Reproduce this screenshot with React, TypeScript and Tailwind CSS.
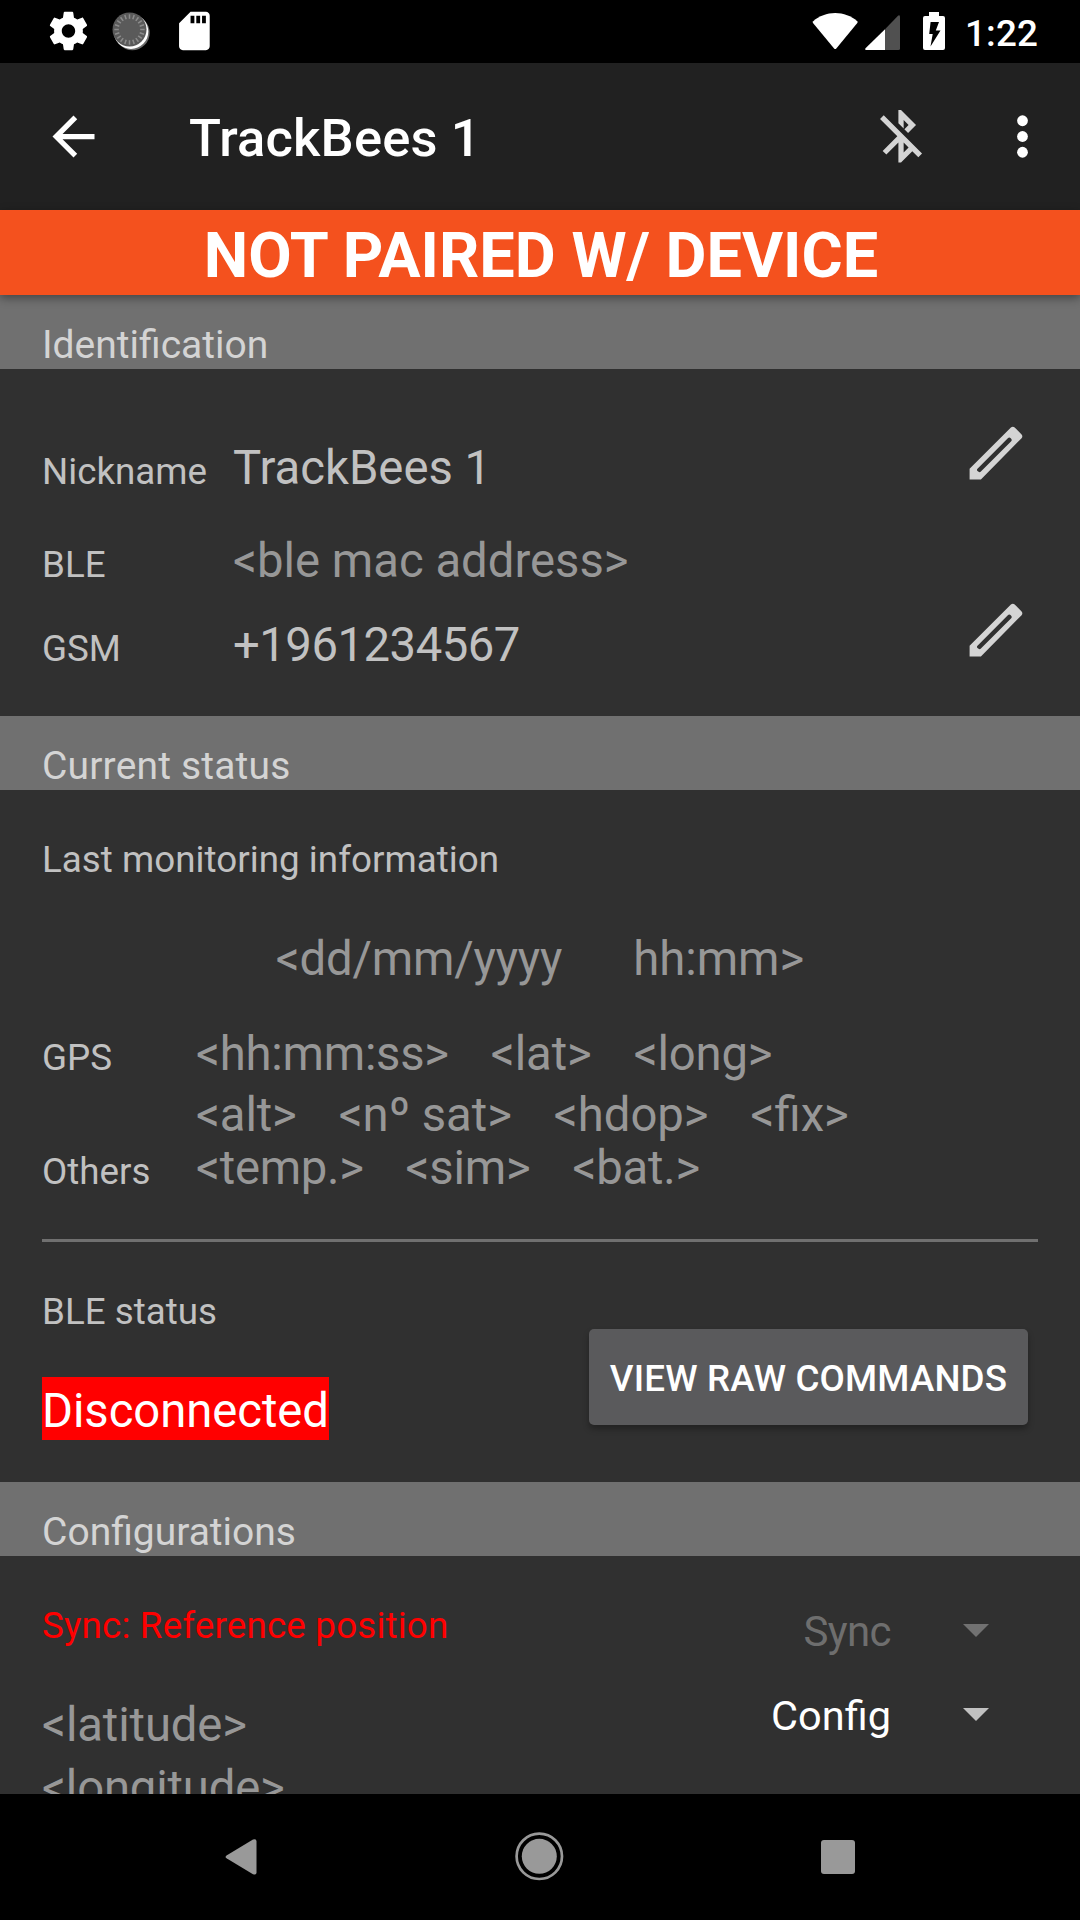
import type { ReactNode } from 'react';

const TICKS = Array.from({ length: 20 }, (_, i) => i * 18);

function StatusBar() {
  return (
    <div className="flex h-[63px] shrink-0 items-start bg-black pl-[45px] pr-[42px] text-white">
      <svg className="mt-[8px] h-[46px] w-[46px]" viewBox="-0.25 0 24 24" fill="currentColor">
        <path d="M19.43 12.98c.04-.32.07-.64.07-.98s-.03-.66-.07-.98l2.11-1.65c.19-.15.24-.42.12-.64l-2-3.46c-.12-.22-.39-.3-.61-.22l-2.49 1c-.52-.4-1.08-.73-1.69-.98l-.38-2.65C14.46 2.18 14.25 2 14 2h-4c-.25 0-.46.18-.49.42l-.38 2.65c-.61.25-1.17.59-1.69.98l-2.49-1c-.23-.09-.49 0-.61.22l-2 3.46c-.13.22-.07.49.12.64l2.11 1.65c-.04.32-.07.65-.07.98s.03.66.07.98l-2.11 1.65c-.19.15-.24.42-.12.64l2 3.46c.12.22.39.3.61.22l2.49-1c.52.4 1.08.73 1.69.98l.38 2.65c.03.24.24.42.49.42h4c.25 0 .46-.18.49-.42l.38-2.65c.61-.25 1.17-.59 1.69-.98l2.49 1c.23.09.49 0 .61-.22l2-3.46c.12-.22.07-.49-.12-.64l-2.11-1.65zM12 15.5c-1.93 0-3.5-1.57-3.5-3.5s1.57-3.5 3.5-3.5 3.5 1.57 3.5 3.5-1.57 3.5-3.5 3.5z" />
      </svg>
      <svg className="ml-[19px] mt-[10px] h-[42px] w-[42px]" viewBox="110 10 42 42">
        <circle cx="132.3" cy="32.8" r="17.4" fill="#6a6a6a" />
        <circle cx="131" cy="31.6" r="17.3" fill="#fff" />
        <circle cx="129.5" cy="29.5" r="17" fill="#5a5a5a" />
        {TICKS.map((deg) => (
          <line key={deg} x1="129.5" y1="14.3" x2="129.5" y2="18.8" stroke="#8c8c8c" strokeWidth="1.5" transform={`rotate(${deg} 129.5 29.5)`} />
        ))}
      </svg>
      <svg className="ml-[19px] mt-[8px] h-[46px] w-[46px]" viewBox="-0.2 0 24 24" fill="currentColor">
        <path d="M18 2h-8L4.02 8 4 20c0 1.1.9 2 2 2h12c1.1 0 2-.9 2-2V4c0-1.1-.9-2-2-2zm-6 6h-2V4h2v4zm3 0h-2V4h2v4zm3 0h-2V4h2v4z" />
      </svg>
      <svg className="ml-auto mt-[10px] h-[42px] w-[46px]" viewBox="812 10 46 42" fill="currentColor">
        <path d="M813.2 21.2C819 16 827 13 835.2 13s16.200 3 22 8.200q.8.900.1 1.900L836.300 48.400q-1.100 1.300-2.200 0L813 23.100q-.7-1 .2-1.900z" />
      </svg>
      <svg className="ml-[6px] mt-[10px] h-[42px] w-[38px]" viewBox="864 10 38 42" fill="currentColor">
        <path d="M885 29.200L865.500 48.200Q864.500 50 866.600 50H885z" />
        <path d="M885 29.200V50h13.500q1.500 0 1.500-1.500V16.500q-.4-2-2-.8z" fill="#505050" />
      </svg>
      <svg className="ml-[20px] mt-[10px] h-[42px] w-[24px]" viewBox="922 10 24 42" fill="currentColor" fillRule="evenodd">
        <path d="M929 12h10v4h4q2 0 2 2v30q0 2-2 2h-18q-2 0-2-2V18q0-2 2-2h4zM930.600 22l-1.400 12h3.500l-2.200 12.400L940.500 30.500h-4.700L939 22z" />
      </svg>
      <div className="ml-[19px] mt-[12px] w-[73px] text-[36.75px] font-medium leading-[43px] tracking-[0.2px]">1:22</div>
    </div>
  );
}

function AppBar() {
  return (
    <div className="flex h-[147px] shrink-0 items-center bg-[#212121] px-[42px] text-white">
      <svg className="h-[63px] w-[63px]" viewBox="0 0 24 24" fill="currentColor">
        <path d="M20 11H7.830l5.590-5.590L12 4l-8 8 8 8 1.410-1.410L7.830 13H20v-2z" />
      </svg>
      <h1 className="ml-[84px] pt-[3px] text-[52.5px] font-medium leading-[62px] tracking-[0.15px]">TrackBees 1</h1>
      <svg className="ml-auto h-[63px] w-[63px] text-[#d4d4d4]" viewBox="-0.2 0.1 24 24" fill="currentColor">
        <path d="M13 5.830l1.880 1.880-1.600 1.600 1.410 1.410 3.020-3.020L12 2h-1v5.030l2 2v-3.200zM5.410 4L4 5.410 10.590 12 5 17.590 6.410 19 11 14.410V22h1l4.290-4.290 2.300 2.290L20 18.590 5.410 4zM13 18.170v-3.760l1.880 1.880L13 18.170z" />
      </svg>
      <svg className="-mr-[16px] ml-[59px] h-[63px] w-[63px]" viewBox="0 0 24 24" fill="currentColor">
        <circle cx="12" cy="6" r="2.050" />
        <circle cx="12" cy="12" r="2.050" />
        <circle cx="12" cy="18" r="2.050" />
      </svg>
    </div>
  );
}

function SectionHeader({ children, className = '' }: { children: ReactNode; className?: string }) {
  return (
    <h2 className={`h-[74px] shrink-0 bg-[#707070] pl-[42px] pt-[27px] text-[39px] leading-[46px] text-[#d4d4d4] ${className}`}>
      {children}
    </h2>
  );
}

function Pencil() {
  return (
    <svg className="-mt-[14px] ml-auto h-[53px] w-[53px] self-start overflow-visible" viewBox="0.4 -0.4 53 53" fill="#d4d4d4" fillRule="evenodd">
      <path d="M0 53V42.300L41.300 1.100Q43.200-.500 45.100 1.100L52 8Q53.500 9.900 52 11.800L11.300 53zM7.900 42.300Q6.800 43.500 7.900 44.600Q9.700 46.500 11.300 45.200L41.600 14.900Q42.700 13.500 41.400 12.100Q39.700 10.300 38.500 11.500z" />
    </svg>
  );
}

type FieldProps = { label: string; value: string; valueClass?: string; edit?: boolean };

function Field({ label, value, valueClass = '', edit }: FieldProps) {
  return (
    <div className="flex h-[56px] items-baseline">
      <div className="w-[191px] text-[36.75px] leading-[43px]">{label}</div>
      <div className={`text-[47.25px] leading-[56px] ${valueClass}`}>{value}</div>
      {edit && <Pencil />}
    </div>
  );
}

function Values({ items }: { items: [string, string][] }) {
  return (
    <div className="flex gap-[42px] text-[47.25px] leading-[50px] text-[#979797]">
      {items.map(([text, tracking]) => (
        <span key={text} className={tracking}>{text}</span>
      ))}
    </div>
  );
}

function Spinner({ label, disabled }: { label: string; disabled?: boolean }) {
  return (
    <div className={disabled ? 'flex h-[49px] items-center justify-end text-[#6e6e6e]' : 'flex h-[49px] items-center justify-end text-white'}>
      <span className={disabled ? 'text-[42px] leading-[49px] tracking-[-0.6px]' : 'text-[41.5px] leading-[49px]'}>{label}</span>
      <svg className={disabled ? 'mb-[2px] ml-[72px] h-[13px] w-[26px] text-[#717171]' : 'mb-[2px] ml-[72px] h-[13px] w-[26px] text-[#c1c1c1]'} viewBox="0 0 26 13" fill="currentColor">
        <path d="M0 0h26L13 13z" />
      </svg>
    </div>
  );
}

export default function App() {
  return (
    <div className="flex h-[1920px] w-[1080px] flex-col overflow-hidden whitespace-nowrap bg-[#303030] font-[Roboto,sans-serif] text-[#c1c1c1]">
      <StatusBar />
      <AppBar />
      <div className="relative z-10 h-[85px] shrink-0 bg-[#f4511e] pl-[2px] pt-[9px] text-center text-[63px] font-bold leading-[73px] text-white shadow-[0_3px_9px_rgba(0,0,0,0.4)]">
        NOT PAIRED W/ DEVICE
      </div>

      <SectionHeader>Identification</SectionHeader>
      <section className="flex h-[347px] shrink-0 flex-col pl-[42px] pr-[57px] pt-[71px]">
        <Field label="Nickname" value="TrackBees 1" edit />
        <div className="mt-[37px]">
          <Field label="BLE" value="<ble mac address>" valueClass="text-[#979797]" />
        </div>
        <div className="mt-[28px]">
          <Field label="GSM" value="+1961234567" valueClass="tracking-[-0.5px]" edit />
        </div>
      </section>

      <SectionHeader className="tracking-[0.17px]">Current status</SectionHeader>
      <section className="flex h-[692px] shrink-0 flex-col px-[42px] pt-[48px]">
        <div className="text-[36.75px] leading-[43px] tracking-[0.03px]">Last monitoring information</div>
        <div className="mt-[53px] flex justify-center gap-[71px] text-[47.25px] leading-[50px] text-[#979797]">
          <span className="tracking-[-0.2px]">&lt;dd/mm/yyyy</span>
          <span>hh:mm&gt;</span>
        </div>
        <div className="mt-[45px] flex items-baseline">
          <div className="w-[154px] text-[36.75px] leading-[43px]">GPS</div>
          <div className="flex flex-col gap-[11px]">
            <Values items={[['<hh:mm:ss>', 'tracking-[-0.25px]'], ['<lat>', 'tracking-[-0.1px]'], ['<long>', 'tracking-[-0.2px]']]} />
            <Values items={[['<alt>', 'tracking-[-0.15px]'], ['<nº sat>', 'tracking-[-0.05px]'], ['<hdop>', 'tracking-[-0.05px]'], ['<fix>', '']]} />
          </div>
        </div>
        <div className="mt-[3px] flex items-baseline">
          <div className="w-[154px] text-[36.75px] leading-[43px]">Others</div>
          <Values items={[['<temp.>', 'tracking-[-0.3px]'], ['<sim>', 'tracking-[-0.25px]'], ['<bat.>', 'tracking-[-0.2px]']]} />
        </div>
        <div className="mt-[46px] h-[3px] w-[996px] shrink-0 bg-[#707070]" />
        <div className="flex justify-between">
          <div className="flex flex-col items-start pt-[48px]">
            <div className="text-[36.75px] leading-[43px]">BLE status</div>
            <div className="mt-[44px] h-[63px] w-[287px] bg-[#ff0000] pt-[6px] text-[47.25px] leading-[56px] tracking-[-0.07px] text-white">Disconnected</div>
          </div>
          <button className="mr-[10px] mt-[87px] h-[96px] w-[439px] rounded-[5px] bg-[#5a5a5c] pt-[3px] text-center text-[36.75px] font-medium leading-[43px] tracking-[0.14px] text-white shadow-[0_4px_6px_rgba(0,0,0,0.3)]">
            VIEW RAW COMMANDS
          </button>
        </div>
      </section>

      <SectionHeader>Configurations</SectionHeader>
      <section className="flex h-[238px] shrink-0 justify-between overflow-hidden pl-[42px] pr-[91px]">
        <div className="flex flex-col pt-[48px]">
          <div className="text-[36.75px] leading-[43px] tracking-[0.18px] text-[#ff0000]">Sync: Reference position</div>
          <div className="mt-[50px] text-[47.25px] leading-[56px] tracking-[-0.12px] text-[#979797]">&lt;latitude&gt;</div>
          <div className="mt-[7px] text-[47.25px] leading-[56px] tracking-[-0.17px] text-[#979797]">&lt;longitude&gt;</div>
        </div>
        <div className="flex flex-col gap-[35px] pt-[51px]">
          <Spinner label="Sync" disabled />
          <Spinner label="Config" />
        </div>
      </section>

      <nav className="flex h-[126px] shrink-0 items-center bg-black pl-[225px] text-[#999999]">
        <svg className="h-[36px] w-[32px]" viewBox="0 0 32 36" fill="currentColor">
          <path d="M1.500 16.500L28 .600Q31.500-.800 31.500 2.500V33.500Q31.500 36.500 28 35.200L1.500 19.300Q-.300 18 1.500 16.500z" />
        </svg>
        <svg className="ml-[257px] h-[50px] w-[50px]" viewBox="0 0 50 50">
          <circle cx="25.300" cy="24.300" r="22.700" fill="none" stroke="currentColor" strokeWidth="2.700" />
          <circle cx="25.300" cy="24.300" r="17.500" fill="currentColor" />
        </svg>
        <div className="ml-[257px] h-[34px] w-[34px] rounded-[3px] bg-[#999999]" />
      </nav>
    </div>
  );
}
